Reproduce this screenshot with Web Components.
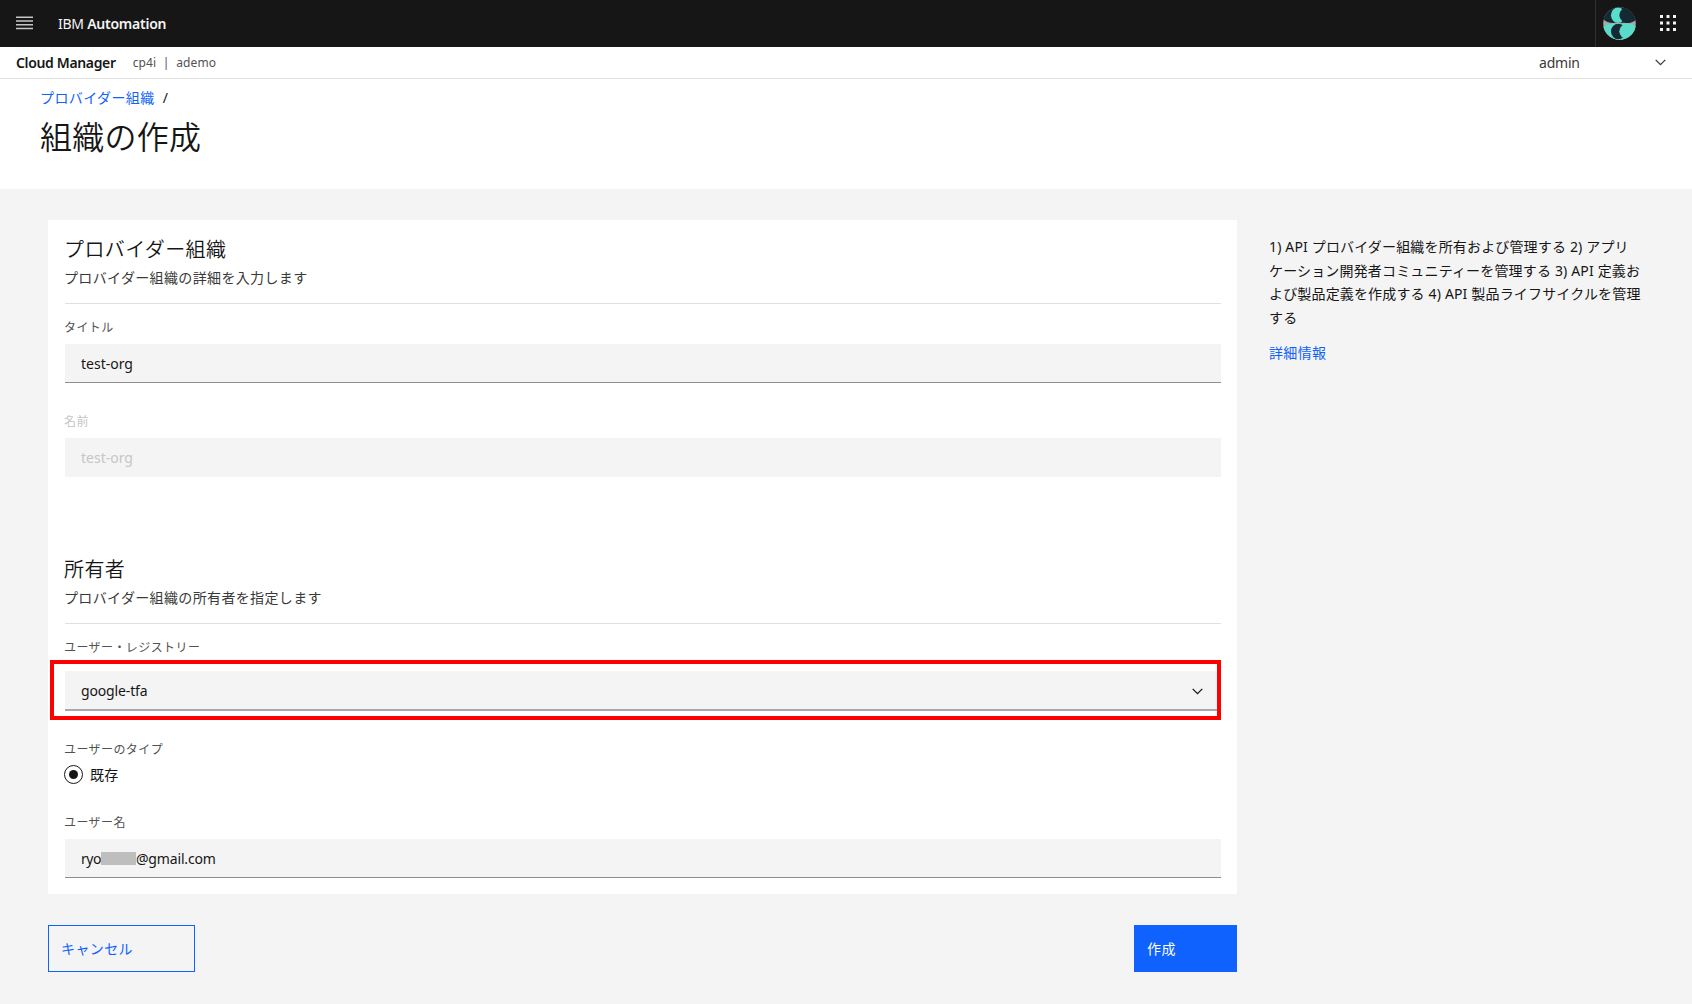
<!DOCTYPE html>
<html lang="ja">
<head>
<meta charset="utf-8">
<title>Cloud Manager</title>
<style>
html,body{margin:0;height:100%}
body{background:#f4f4f4;color:#161616;overflow:hidden;font-family:"Noto Sans","Noto Sans CJK JP",sans-serif}
</style>
</head>
<body>
<cm-app></cm-app>
<script>
function define(name, html, setup) {
  customElements.define(name, class extends HTMLElement {
    constructor() {
      super();
      this.attachShadow({mode: 'open'}).innerHTML = '<style>*{box-sizing:border-box}</style>' + html;
    }
    connectedCallback() { if (setup) setup(this, this.shadowRoot); }
  });
}

/* One run of text: size, line height, weight, tracking and colour come from attributes. */
define('cm-text', `<style>
:host{display:block;white-space:nowrap;flex:none}
</style><slot></slot>`, (el) => {
  el.style.fontSize = el.getAttribute('size') + 'px';
  el.style.lineHeight = el.getAttribute('lh') + 'px';
  if (el.hasAttribute('weight')) el.style.fontWeight = el.getAttribute('weight');
  if (el.hasAttribute('track')) el.style.letterSpacing = el.getAttribute('track') + 'px';
  if (el.hasAttribute('color')) el.style.color = el.getAttribute('color');
});

define('cm-topbar', `<style>
:host{display:flex;height:47px;background:#161616;color:#f4f4f4;align-items:center}
.menu{margin-left:16px;width:17px;height:14px;margin-right:25px}
cm-text{flex:1}
b{font-weight:600}
.user{height:47px;border-left:1px solid #303030;padding:7px 0 0 7px;width:65px}
svg{display:block;flex:none}
.menu{margin-top:-1px}
.grid{margin:-1px 15px 0 0}
</style>
<svg class="menu" viewBox="0 0 17 14"><path d="M0 1.2h17M0 5h17M0 8.800h17M0 12.500h17" stroke="#c6c6c6" stroke-width="1.5"/></svg>
<cm-text size="14" lh="20" track="-.25"><span>IBM </span><b>Automation</b></cm-text>
<div class="user"><svg width="34" height="34" viewBox="0 0 34 34">
<defs><clipPath id="c"><circle cx="16.500" cy="16.500" r="16.300"/></clipPath></defs>
<g clip-path="url(#c)"><rect width="34" height="34" fill="#a8a8a8"/>
<path d="M0 0H34V12Q30 16 24 16H10Q4 16 0 12Z" fill="#152935"/>
<path d="M0 20Q4 16.500 11 16.500H23Q30 16.500 34 20V34H0Z" fill="#5adccb"/>
<ellipse cx="15" cy="8.200" rx="7" ry="7.800" fill="#5adccb"/>
<ellipse cx="24.300" cy="8" rx="8" ry="7.600" fill="#152935"/>
<ellipse cx="15.300" cy="24.500" rx="7.300" ry="7.800" fill="#152935"/>
<ellipse cx="24.300" cy="24.300" rx="8" ry="7.600" fill="#5adccb"/>
<path d="M11 16.200H22" stroke="#a8a8a8" stroke-width=".7"/></g></svg></div>
<svg class="grid" width="17" height="17" viewBox="0 0 17 17" fill="#f4f4f4"><path d="M0 0h3v3h-3zM6.500 0h3v3h-3zM13 0h3v3h-3zM0 6.500h3v3h-3zM6.500 6.500h3v3h-3zM13 6.500h3v3h-3zM0 13h3v3h-3zM6.500 13h3v3h-3zM13 13h3v3h-3z"/></svg>`);

define('cm-subbar', `<style>
:host{display:flex;height:32px;background:#fff;border-bottom:1px solid #e0e0e0;align-items:center;padding:0 26px 0 16px}
.ctx{flex:1;margin-left:17px}
.user{width:116px}
svg{display:block}
</style>
<cm-text size="14" lh="20" weight="600" track="-.35">Cloud Manager</cm-text>
<cm-text class="ctx" size="12" lh="18" track=".14" color="#525252"><span>cp4i</span>&nbsp; | &nbsp;<span>ademo</span></cm-text>
<cm-text class="user" size="14" lh="20" track="-.2" color="#393939">admin</cm-text>
<svg width="11" height="7" viewBox="0 0 11 7"><path d="M.7.900 5.500 5.600 10.300.900" fill="none" stroke="#393939" stroke-width="1.300"/></svg>`);

define('cm-pagehead', `<style>
:host{display:block;height:110px;background:#fff;padding:9px 0 0 40px}
.crumbs{display:flex;gap:8px}
.h{margin-top:9px}
</style>
<div class="crumbs"><cm-text size="14" lh="20" track=".4" color="#0f62fe">プロバイダー組織</cm-text><cm-text size="14" lh="20">/</cm-text></div>
<cm-text class="h" size="32" lh="40" weight="350" track=".25">組織の作成</cm-text>`);

define('cm-section', `<style>
:host{display:block}
header{height:84px;border-bottom:1px solid #e0e0e0;padding-top:16px}
.t{margin-left:-1px}
.sub{margin:4px 0 0 -1px}
</style>
<header><cm-text class="t" size="20" lh="28" weight="350" track=".4"><slot name="title"></slot></cm-text>
<cm-text class="sub" size="14" lh="20" track=".36" color="#393939"><slot name="sub"></slot></cm-text></header>
<slot></slot>`);

define('cm-field', `<style>
:host{display:block}
.box{height:39px;margin-top:7px;background:#f4f4f4;border-bottom:1px solid #8d8d8d;padding:1px 16px 0;display:flex;align-items:center;justify-content:space-between}
:host([select]) .box{margin-top:14px;height:40px;border-bottom:2px solid #a8a8a8;padding-top:2px}
:host([disabled]) .box{border-color:transparent}
:host([disabled]){color:#c6c6c6}
.lab{color:#525252;margin-left:-1px}
:host([disabled]) .lab{color:#c6c6c6}
.val{display:flex;align-items:center}
svg{display:none;margin-right:2px}
:host([select]) svg{display:block}
</style>
<cm-text class="lab" size="12" lh="18" track=".42"><slot name="label"></slot></cm-text>
<div class="box"><cm-text size="14" lh="20"><div class="val"><slot></slot></div></cm-text>
<svg width="11" height="7" viewBox="0 0 11 7"><path d="M.7.900 5.500 5.600 10.300.900" fill="none" stroke="#161616" stroke-width="1.300"/></svg></div>`);

define('cm-radio', `<style>
:host{display:flex;align-items:center;gap:7px}
i{width:19px;height:19px;border:1px solid #161616;border-radius:50%;display:grid;place-items:center}
i::after{content:"";width:9px;height:9px;border-radius:50%;background:#161616}
</style><i></i><cm-text size="14" lh="19" track=".16"><slot></slot></cm-text>`);

define('cm-button', `<style>
:host{display:flex;align-items:center;height:47px;padding-left:12px;border:1px solid #0f62fe;color:#0f62fe}
:host([primary]){background:#0f62fe;color:#fff}
</style><cm-text size="14" lh="20" track=".4"><slot></slot></cm-text>`);

define('cm-redact', `<style>:host{display:block;width:35px;height:13px;background:#bebebe}</style>`);

define('cm-card', `<style>
:host{display:block;position:relative;background:#fff;height:674px;padding:0 16px 0 17px;width:1189px}
.f1{margin-top:15px}.f2{margin-top:30px}
.s2{margin-top:63px}
.f3{margin-top:15px}
.type{margin:30px 0 0 -1px}
.radio{margin:6px 0 0 -1px}
.f4{margin-top:30px}
.mail{letter-spacing:-.15px}
.ryo{letter-spacing:-.5px}
.reg{letter-spacing:-.15px}
.mark{position:absolute;left:2px;top:440px;width:1171px;height:60px;border:4px solid #f00}
</style>
<cm-section><span slot="title">プロバイダー組織</span><span slot="sub">プロバイダー組織の詳細を入力します</span>
<cm-field class="f1"><span slot="label">タイトル</span><span>test-org</span></cm-field>
<cm-field class="f2" disabled><span slot="label">名前</span><span>test-org</span></cm-field></cm-section>
<cm-section class="s2"><span slot="title">所有者</span><span slot="sub">プロバイダー組織の所有者を指定します</span>
<cm-field class="f3" select><span slot="label">ユーザー・レジストリー</span><span class="reg">google-tfa</span></cm-field>
<cm-text class="type" size="12" lh="18" track=".42" color="#525252">ユーザーのタイプ</cm-text>
<cm-radio class="radio">既存</cm-radio>
<cm-field class="f4"><span slot="label">ユーザー名</span><span class="ryo">ryo</span><cm-redact></cm-redact><span class="mail">@gmail.com</span></cm-field></cm-section>
<div class="mark"></div>`);

define('cm-help', `<style>
:host{display:block;width:390px;padding-top:15px}
p{margin:0;font-size:14px;line-height:23.67px;letter-spacing:.16px;white-space:nowrap}
.link{margin-top:13px}
</style>
<p><span>1) API プロバイダー組織を所有および管理する 2) アプリ</span><br><span>ケーション開発者コミュニティーを管理する 3) API 定義お</span><br><span>よび製品定義を作成する 4) API 製品ライフサイクルを管理</span><br><span>する</span></p>
<cm-text class="link" size="14" lh="20" track=".32" color="#0f62fe">詳細情報</cm-text>`);

define('cm-app', `<style>
:host{display:flex;flex-direction:column;width:1692px;height:1004px}
main{display:flex;gap:32px;padding:31px 0 0 48px}
.actions{display:flex;justify-content:space-between;margin-top:31px}
.cancel{width:147px}.create{width:103px}
</style>
<cm-topbar></cm-topbar><cm-subbar></cm-subbar><cm-pagehead></cm-pagehead>
<main><div><cm-card></cm-card>
<div class="actions"><cm-button class="cancel">キャンセル</cm-button><cm-button class="create" primary>作成</cm-button></div></div>
<cm-help></cm-help></main>`);
</script>
</body>
</html>
